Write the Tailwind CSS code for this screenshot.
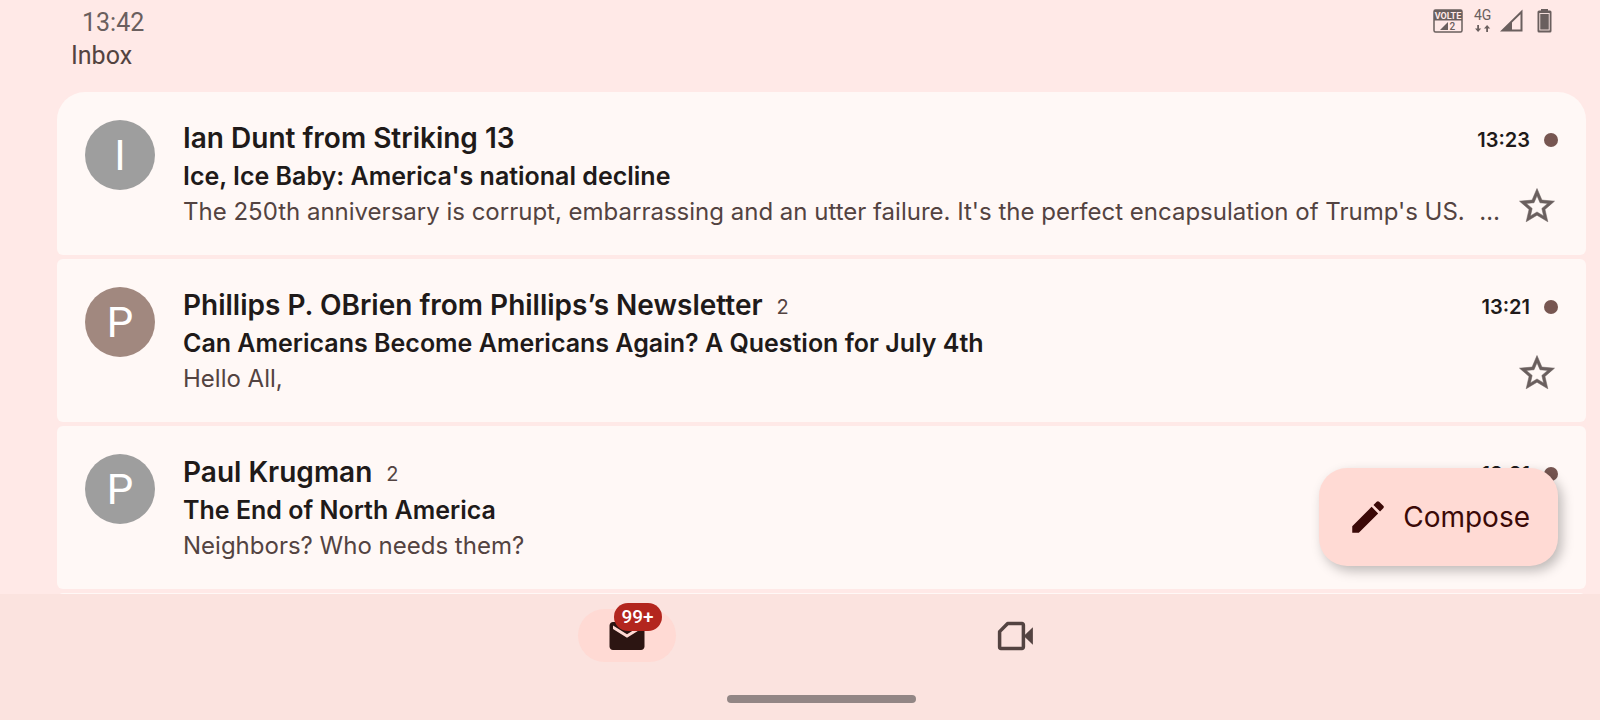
<!DOCTYPE html>
<html lang="en">
<head>
  <meta charset="UTF-8" />
  <meta name="viewport" content="width=device-width,initial-scale=1" />
  <title>Inbox</title>
  <script src="https://cdn.jsdelivr.net/npm/@tailwindcss/browser@4"></script>
</head>
<body class="relative flex h-screen flex-col overflow-hidden bg-[#ffe9e7] font-[Inter,'Liberation_Sans',sans-serif] text-[#201a19]">

  <!-- Status bar -->
  <div class="flex h-10 shrink-0 items-center justify-between pt-0.5 pr-12 pl-[82px] font-[Roboto,sans-serif] text-[#6a5f5e]">
    <time class="mt-1 text-[25px] leading-9">13:42</time>
    <div class="flex items-center">
      <svg class="mr-[11px] h-6 w-[30px] overflow-visible" viewBox="0 0 30 24" role="img" aria-label="VoLTE, SIM 2">
        <rect x="1" y="1" width="28" height="22" rx="1.5" fill="none" stroke="currentColor" stroke-width="1.5" />
        <path d="M1 1h28v10.500H1z" fill="currentColor" />
        <text x="15" y="10" text-anchor="middle" font-size="9" font-weight="700" fill="#ffe9e7">VOLTE</text>
        <path d="M7 21h8v-8z" fill="currentColor" />
        <text x="16.500" y="21" font-size="10" font-weight="500" fill="currentColor">2</text>
      </svg>
      <svg class="mr-2 h-6 w-[18px] overflow-visible" viewBox="0 0 18 24" role="img" aria-label="4G data">
        <text x="0" y="11" font-size="14" fill="currentColor">4G</text>
        <path d="M3.200 16h1.800v3.500h2.200l-3.100 3.500-3.100-3.500h2.200zM12.200 23H14v-3.500h2.200L13.100 16 10 19.500h2.200z" fill="currentColor" />
      </svg>
      <svg class="mr-[14px] h-6 w-[23px]" viewBox="0 0 23 24" role="img" aria-label="Signal">
        <path fill-rule="evenodd" d="M0 22.500 22.500.500v22zM12 13.500v7h8.500V5.300z" fill="currentColor" />
      </svg>
      <svg class="h-6 w-[15px]" viewBox="0 0 15 24" role="img" aria-label="Battery">
        <path d="M4 0h7v3H4z" fill="currentColor" />
        <rect x=".5" y="1.500" width="14" height="22" rx="1.500" fill="currentColor" />
        <rect x="2.800" y="4.500" width="9.400" height="16.500" fill="none" stroke="#ffe9e7" stroke-width=".9" />
      </svg>
    </div>
  </div>

  <h1 class="h-[52px] shrink-0 pl-[71px] font-[Roboto,sans-serif] text-[25px] leading-8 text-[#534341]">Inbox</h1>

  <!-- Conversation list -->
  <main class="min-h-0 flex-1 overflow-hidden pr-[14px] pl-[57px]">
    <div class="flex flex-col gap-1">

      <article class="flex h-[163px] gap-7 rounded-md rounded-t-[28px] bg-[#fff8f6] px-7 pt-7">
        <div class="flex size-[70px] shrink-0 items-center justify-center rounded-full bg-[#9e9e9e] font-[Roboto,sans-serif] text-[42px] text-white">I</div>
        <div class="min-w-0 flex-1">
          <div class="flex h-9 items-center">
            <h2 class="text-[28px] leading-9 font-semibold">Ian Dunt from Striking 13</h2>
            <time class="mt-1 mr-[14px] ml-auto text-[20px] leading-9 font-semibold">13:23</time>
            <span class="mt-1 size-[14px] rounded-full bg-[#775651]"></span>
          </div>
          <div class="flex">
            <div class="min-w-0 flex-1">
              <p class="text-[25px] leading-10 font-semibold">Ice, Ice Baby: America's national decline</p>
              <p class="flex justify-between text-[24px] leading-8 whitespace-nowrap text-[#534341]"><span>The 250th anniversary is corrupt, embarrassing and an utter failure. It's the perfect encapsulation of Trump's US.</span><span>…</span></p>
            </div>
            <button type="button" aria-label="Star conversation" class="mt-[29px] ml-4 size-[42px] text-[#6a5f5e]">
              <svg viewBox="0 0 24 24" fill="currentColor" stroke="currentColor" stroke-width=".3"><path d="m22 9.240-7.190-.620L12 2 9.190 8.630 2 9.240l5.460 4.730L5.820 21 12 17.270 18.180 21l-1.630-7.030zM12 15.400l-3.760 2.270 1-4.280-3.320-2.880 4.380-.380L12 6.100l1.710 4.040 4.380.380-3.320 2.880 1 4.280z" /></svg>
            </button>
          </div>
        </div>
      </article>

      <article class="flex h-[163px] gap-7 rounded-md bg-[#fff8f6] px-7 pt-7">
        <div class="flex size-[70px] shrink-0 items-center justify-center rounded-full bg-[#a1887f] font-[Roboto,sans-serif] text-[42px] text-white">P</div>
        <div class="min-w-0 flex-1">
          <div class="flex h-9 items-center">
            <h2 class="text-[28px] leading-9 font-semibold">Phillips P. OBrien from Phillips’s Newsletter</h2>
            <span class="mt-1 ml-[14px] text-[20px] leading-9 text-[#534341]">2</span>
            <time class="mt-1 mr-[14px] ml-auto text-[20px] leading-9 font-semibold">13:21</time>
            <span class="mt-1 size-[14px] rounded-full bg-[#775651]"></span>
          </div>
          <div class="flex">
            <div class="min-w-0 flex-1">
              <p class="text-[25px] leading-10 font-semibold">Can Americans Become Americans Again? A Question for July 4th</p>
              <p class="text-[24px] leading-8 text-[#534341]">Hello All,</p>
            </div>
            <button type="button" aria-label="Star conversation" class="mt-[29px] ml-4 size-[42px] text-[#6a5f5e]">
              <svg viewBox="0 0 24 24" fill="currentColor" stroke="currentColor" stroke-width=".3"><path d="m22 9.240-7.190-.620L12 2 9.190 8.630 2 9.240l5.460 4.730L5.820 21 12 17.270 18.180 21l-1.630-7.030zM12 15.400l-3.760 2.270 1-4.280-3.320-2.880 4.380-.380L12 6.100l1.710 4.040 4.380.380-3.320 2.880 1 4.280z" /></svg>
            </button>
          </div>
        </div>
      </article>

      <article class="flex h-[163px] gap-7 rounded-md bg-[#fff8f6] px-7 pt-7">
        <div class="flex size-[70px] shrink-0 items-center justify-center rounded-full bg-[#9e9e9e] font-[Roboto,sans-serif] text-[42px] text-white">P</div>
        <div class="min-w-0 flex-1">
          <div class="flex h-9 items-center">
            <h2 class="text-[28px] leading-9 font-semibold">Paul Krugman</h2>
            <span class="mt-1 ml-[14px] text-[20px] leading-9 text-[#534341]">2</span>
            <time class="mt-1 mr-[14px] ml-auto text-[20px] leading-9 font-semibold">13:21</time>
            <span class="mt-1 size-[14px] rounded-full bg-[#775651]"></span>
          </div>
          <p class="text-[25px] leading-10 font-semibold">The End of North America</p>
          <p class="text-[24px] leading-8 text-[#534341]">Neighbors? Who needs them?</p>
        </div>
      </article>

      <article class="h-[163px] rounded-md bg-[#fff8f6]"></article>
    </div>
  </main>

  <!-- Floating compose button -->
  <button type="button" class="absolute right-[42px] bottom-[154px] flex h-[98px] items-center gap-[14px] rounded-[28px] bg-[#ffdad4] px-7 text-[28px] text-[#3b0907] shadow-[4px_5px_12px_rgba(0,0,0,0.25)]">
    <svg class="size-[42px]" viewBox="0 0 24 24" fill="currentColor"><path d="M3 17.250V21h3.750L17.810 9.940l-3.750-3.750zM20.710 7.040a1 1 0 0 0 0-1.410l-2.340-2.340a1 1 0 0 0-1.410 0l-1.830 1.830 3.750 3.750z" /></svg>
    Compose
  </button>

  <!-- Bottom navigation -->
  <footer class="flex h-[126px] shrink-0 flex-col items-center justify-between bg-[#fbe3df] pt-[15px] pr-[14px] pb-[17px] pl-[57px]">
    <nav class="grid w-[778px] grid-cols-2 justify-items-center pr-0.5">
      <a href="#mail" aria-label="Mail, more than 99 unread" class="relative flex h-[53px] w-[98px] items-center justify-center rounded-full bg-[#ffdad4] text-[#2c1512]">
        <svg class="size-[42px]" viewBox="0 0 24 24" fill="currentColor"><path d="M20 4H4c-1.100 0-1.990.900-1.990 2L2 18c0 1.100.900 2 2 2h16c1.100 0 2-.900 2-2V6c0-1.100-.900-2-2-2m0 4-8 5-8-5V6l8 5 8-5z" /></svg>
        <span class="absolute -top-1.5 left-9 flex h-7 w-12 items-center justify-center rounded-full bg-[#b3261e] font-[Roboto,sans-serif] text-[19px] font-medium text-white">99+</span>
      </a>
      <a href="#meet" aria-label="Meet" class="flex h-[53px] w-[98px] items-center justify-center text-[#534341]">
        <svg class="size-[42px]" viewBox="0 0 24 24" fill="none" stroke="currentColor" stroke-width="2" stroke-linejoin="round"><path d="M7.800 4.900H16a.800.800 0 0 1 .800.800v12.600a.800.800 0 0 1-.800.800H4a.800.800 0 0 1-.800-.800V9.500z" /><path d="M17 12l5.200-5v10z" fill="currentColor" stroke="none" /></svg>
      </a>
    </nav>
    <div class="h-2 w-[189px] rounded-full bg-[#928685]"></div>
  </footer>
</body>
</html>
